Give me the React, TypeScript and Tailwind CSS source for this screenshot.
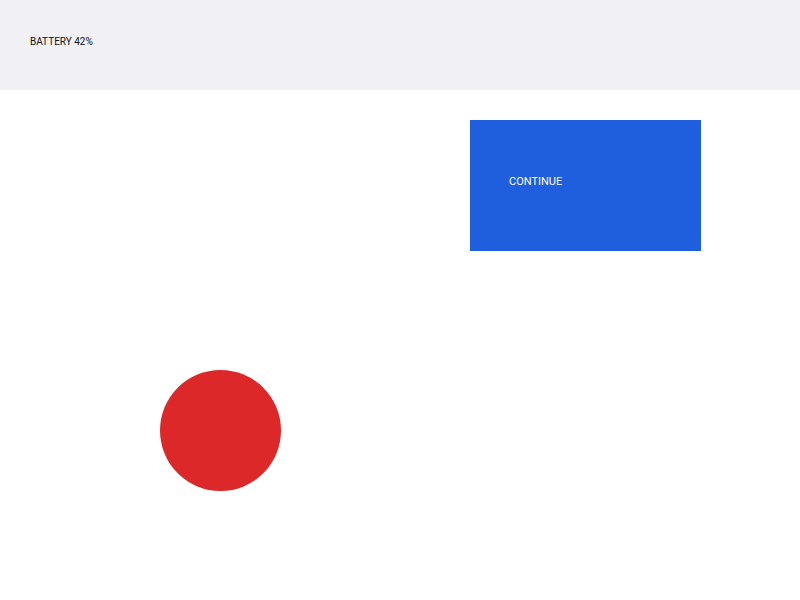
export default function App() {
  return (
    <div className="min-h-[600px] w-[800px] bg-white font-['Roboto',sans-serif]">
      <header className="flex h-[90px] items-center bg-[#f0f0f5] px-[30px] pb-[7px]">
        <span className="text-[10px] leading-none text-[#111]">BATTERY 42%</span>
      </header>
      <main className="flex flex-col">
        <button className="ml-[470px] mt-[30px] flex h-[131px] w-[231px] items-center bg-[#1f5edd] pb-[8px] pl-[39px] text-left text-[11px] leading-none text-white">
          CONTINUE
        </button>
        <div className="ml-[160px] mt-[119px] h-[121px] w-[121px] rounded-full bg-[#dc2828]" />
      </main>
    </div>
  );
}
